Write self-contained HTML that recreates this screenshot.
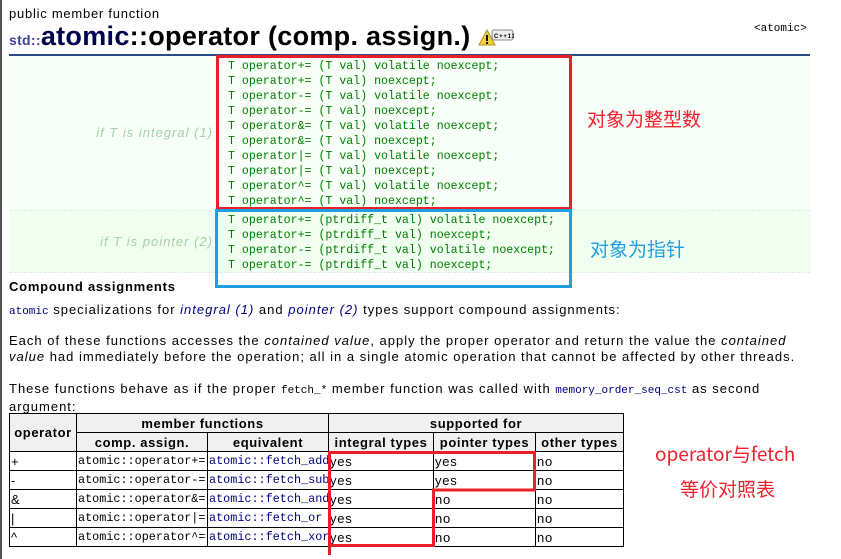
<!DOCTYPE html>
<html><head><meta charset="utf-8">
<style>
*{margin:0;padding:0;box-sizing:border-box}
body{width:841px;height:559px;overflow:hidden;background:#fff;position:relative;font-family:"Liberation Sans","Noto Sans CJK SC",sans-serif;font-size:13px;color:#000;letter-spacing:0.75px}
.a{position:absolute;white-space:nowrap}
.p{letter-spacing:1px}
.mono{font-family:"Liberation Mono",monospace;letter-spacing:0}
.code{font-family:"Liberation Mono",monospace;font-size:11.6px;color:#008000;line-height:15px;letter-spacing:0}
.lab{font-style:italic;color:#a8d0a8;font-size:13px;text-align:right;width:205px;letter-spacing:1px}
table{position:absolute;left:9px;top:413px;border-collapse:collapse;font-size:13px;table-layout:fixed;width:614px}
td,th{border:1px solid #000;padding:0 1px;height:19px;white-space:nowrap;text-align:left;font-weight:normal;overflow:hidden}
th{background:#f0f0f0;font-weight:bold;text-align:center;font-size:13px;letter-spacing:0.6px}
td.m{font-family:"Liberation Mono",monospace;font-size:11.8px;letter-spacing:0}
td.b{color:#000080}
</style></head><body>
<div class="a" style="left:0;top:0;width:2px;height:559px;background:#555"></div>
<div class="a" style="left:9px;top:6px;font-size:13px">public member function</div>
<div class="a" style="left:9px;top:20px;font-size:27px;font-weight:bold;line-height:32px;letter-spacing:0.3px"><span style="font-size:14px;color:#3f3f9f">std::</span><span style="color:#000050">atomic</span>::operator (comp. assign.)</div>
<svg class="a" style="left:478px;top:28px" width="36" height="20"><polygon points="9,2 17,17 1,17" fill="#f0d040" stroke="#b09020"/><rect x="8" y="7" width="2" height="6" fill="#000"/><rect x="8" y="14" width="2" height="2" fill="#000"/><rect x="14" y="2" width="21" height="10" rx="2" fill="#eee" stroke="#888"/><text x="16" y="10" font-size="6" font-family="Liberation Sans" font-weight="bold">C++11</text></svg>
<div class="a mono" style="left:754px;top:23px;font-size:11px">&lt;atomic&gt;</div>
<div class="a" style="left:9px;top:54px;width:801px;height:2px;background:#2b4a80"></div>
<div class="a" style="left:9px;top:56px;width:801px;height:154px;background:#f8fff8"></div>
<div class="a" style="left:9px;top:210px;width:801px;height:63px;background:#f0fff0;border-top:1px dashed #dfeee0;border-bottom:1px dashed #dfeee0"></div>
<div class="a lab" style="left:8px;top:125px">if T is integral (1)</div>
<div class="a lab" style="left:8px;top:234px">if T is pointer (2)</div>
<div class="a code" style="left:228px;top:59px">T operator+= (T val) volatile noexcept;<br>T operator+= (T val) noexcept;<br>T operator-= (T val) volatile noexcept;<br>T operator-= (T val) noexcept;<br>T operator&amp;= (T val) volatile noexcept;<br>T operator&amp;= (T val) noexcept;<br>T operator|= (T val) volatile noexcept;<br>T operator|= (T val) noexcept;<br>T operator^= (T val) volatile noexcept;<br>T operator^= (T val) noexcept;</div>
<div class="a code" style="left:228px;top:213px">T operator+= (ptrdiff_t val) volatile noexcept;<br>T operator+= (ptrdiff_t val) noexcept;<br>T operator-= (ptrdiff_t val) volatile noexcept;<br>T operator-= (ptrdiff_t val) noexcept;</div>
<div class="a" style="left:216px;top:55px;width:356px;height:155px;border:3px solid #e8202a"></div>
<div class="a" style="left:215px;top:209px;width:357px;height:79px;border:3px solid #1ea0e0"></div>
<div class="a" style="left:587px;top:105px;font-size:19px;color:#f02030;font-family:'Noto Sans CJK SC',sans-serif;letter-spacing:0">对象为整型数</div>
<div class="a" style="left:590px;top:235px;font-size:19px;color:#1ea0e0;font-family:'Noto Sans CJK SC',sans-serif;letter-spacing:0">对象为指针</div>
<div class="a" style="left:9px;top:279px;font-weight:bold">Compound assignments</div>
<div class="a p" style="left:9px;top:302px"><span class="mono" style="font-size:11px;color:#000080">atomic</span> specializations for <i style="color:#000080">integral (1)</i> and <i style="color:#000080">pointer (2)</i> types support compound assignments:</div>
<div class="a p" style="left:9px;top:333px;line-height:16px">Each of these functions accesses the <i>contained value</i>, apply the proper operator and return the value the <i>contained</i><br><i>value</i> had immediately before the operation; all in a single atomic operation that cannot be affected by other threads.</div>
<div class="a p" style="left:9px;top:381px;line-height:16px">These functions behave as if the proper <span class="mono" style="font-size:11px">fetch_*</span> member function was called with <span class="mono" style="font-size:11px;color:#000080">memory_order_seq_cst</span> as second<br>argument:</div>
<table>
<colgroup><col style="width:67px"><col style="width:131px"><col style="width:121px"><col style="width:105px"><col style="width:102px"><col style="width:88px"></colgroup>
<tr><th rowspan="2">operator</th><th colspan="2">member functions</th><th colspan="3">supported for</th></tr>
<tr><th>comp. assign.</th><th>equivalent</th><th>integral types</th><th>pointer types</th><th>other types</th></tr>
<tr><td>+</td><td class="m">atomic::operator+=</td><td class="m b">atomic::fetch_add</td><td>yes</td><td>yes</td><td>no</td></tr>
<tr><td>-</td><td class="m">atomic::operator-=</td><td class="m b">atomic::fetch_sub</td><td>yes</td><td>yes</td><td>no</td></tr>
<tr><td>&amp;</td><td class="m">atomic::operator&amp;=</td><td class="m b">atomic::fetch_and</td><td>yes</td><td>no</td><td>no</td></tr>
<tr><td>|</td><td class="m">atomic::operator|=</td><td class="m b">atomic::fetch_or</td><td>yes</td><td>no</td><td>no</td></tr>
<tr><td>^</td><td class="m">atomic::operator^=</td><td class="m b">atomic::fetch_xor</td><td>yes</td><td>no</td><td>no</td></tr>
</table>
<svg class="a" style="left:0;top:0" width="841" height="559"><polyline points="329.5,555 329.5,452.5 534.5,452.5 534.5,490 433.5,490 433.5,545.5 329.5,545.5" fill="none" stroke="#e8202a" stroke-width="3"/></svg>
<div class="a" style="left:655px;top:440px;font-size:19px;color:#f02030;font-family:'Noto Sans CJK SC',sans-serif;letter-spacing:0">operator与fetch</div>
<div class="a" style="left:680px;top:475px;font-size:19px;color:#f02030;font-family:'Noto Sans CJK SC',sans-serif;letter-spacing:0">等价对照表</div>
</body></html>
